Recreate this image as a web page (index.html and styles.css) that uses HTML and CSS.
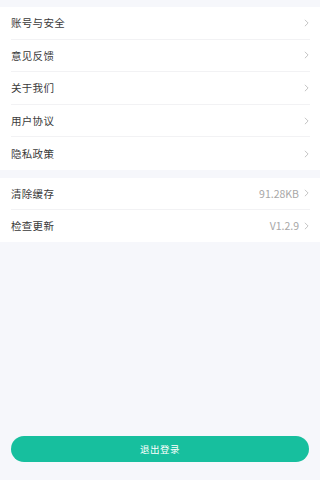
FILE: index.html
```html
<!DOCTYPE html>
<html lang="zh-CN">
<head>
<meta charset="utf-8">
<link rel="stylesheet" href="styles.css">
</head>
<body>
<div class="page">
  <div class="card first">
    <div class="row"><span class="label">账号与安全</span><span class="right"><svg class="chev" viewBox="0 0 6 10"><polyline points="1,1 5,5 1,9"/></svg></span></div>
    <div class="row"><span class="label">意见反馈</span><span class="right"><svg class="chev" viewBox="0 0 6 10"><polyline points="1,1 5,5 1,9"/></svg></span></div>
    <div class="row"><span class="label">关于我们</span><span class="right"><svg class="chev" viewBox="0 0 6 10"><polyline points="1,1 5,5 1,9"/></svg></span></div>
    <div class="row"><span class="label">用户协议</span><span class="right"><svg class="chev" viewBox="0 0 6 10"><polyline points="1,1 5,5 1,9"/></svg></span></div>
    <div class="row"><span class="label">隐私政策</span><span class="right"><svg class="chev" viewBox="0 0 6 10"><polyline points="1,1 5,5 1,9"/></svg></span></div>
  </div>
  <div class="card second">
    <div class="row"><span class="label">清除缓存</span><span class="right"><span class="value">91.28KB</span><svg class="chev" viewBox="0 0 6 10"><polyline points="1,1 5,5 1,9"/></svg></span></div>
    <div class="row"><span class="label">检查更新</span><span class="right"><span class="value">V1.2.9</span><svg class="chev" viewBox="0 0 6 10"><polyline points="1,1 5,5 1,9"/></svg></span></div>
  </div>
  <div class="logout">退出登录</div>
</div>
</body>
</html>
```

FILE: styles.css
```css
html, body {
  margin: 0;
  padding: 0;
  background: #f6f7fb;
}
body {
  font-family: "Noto Sans CJK SC", "Noto Sans", sans-serif;
}
.page {
  display: flex;
  flex-direction: column;
  min-height: 480px;
  box-sizing: border-box;
  padding-top: 7px;
}
.card {
  background: #ffffff;
  display: flex;
  flex-direction: column;
}
.second {
  margin-top: 8px;
}
.row {
  height: 32.6px;
  margin: 0 10px 0 11px;
  display: flex;
  align-items: center;
  justify-content: space-between;
  border-bottom: 1px solid #f2f2f4;
  box-sizing: border-box;
}
.second .row {
  height: 32px;
}
.row:last-child {
  border-bottom: none;
}
.label {
  font-size: 10.5px;
  color: #3a3a3a;
  letter-spacing: 0.3px;
}
.right {
  display: flex;
  align-items: center;
  gap: 5px;
}
.value {
  font-size: 10.5px;
  color: #a8a8a8;
}
.chev {
  width: 5px;
  height: 8px;
  fill: none;
  stroke: #b5b5b5;
  stroke-width: 1;
  margin-right: 1px;
}
.logout {
  margin: auto 11px 18px 11px;
  height: 26px;
  border-radius: 13px;
  background: #17bf9e;
  color: #ffffff;
  font-size: 9.5px;
  display: flex;
  align-items: center;
  justify-content: center;
  letter-spacing: 0.5px;
}
```
